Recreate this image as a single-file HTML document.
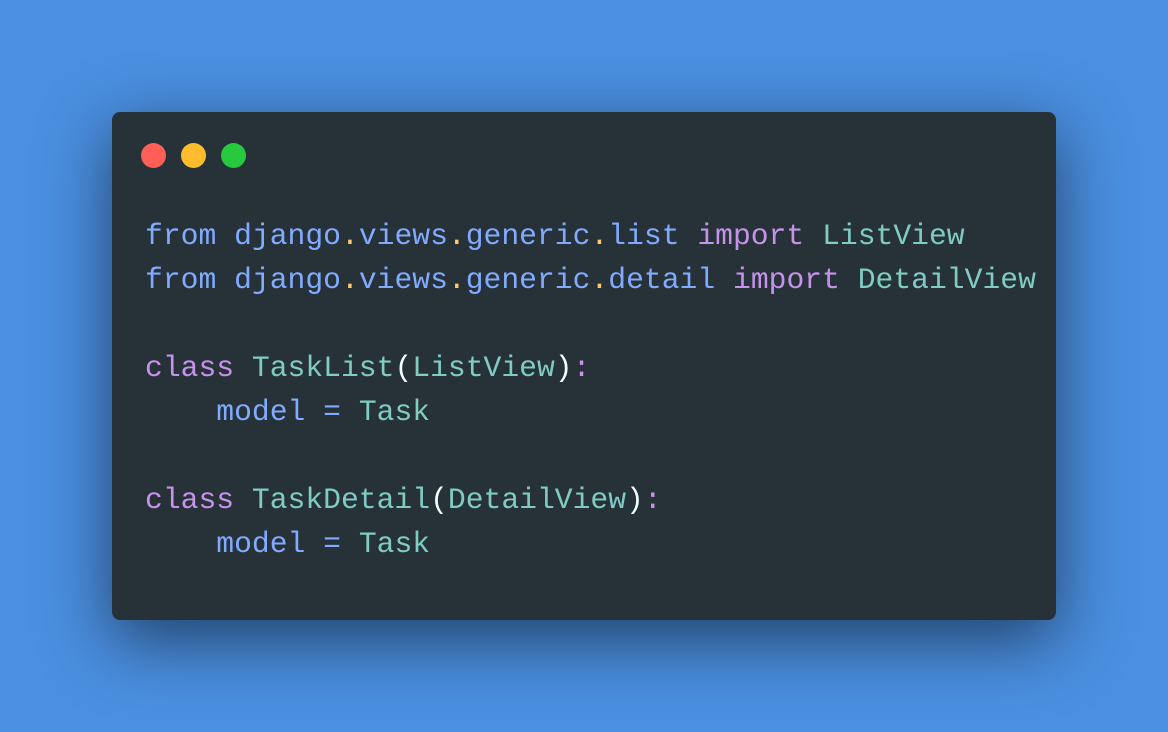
<!DOCTYPE html>
<html><head><style>
html,body{margin:0;padding:0}
body{width:1168px;height:732px;background:#4a8fe0;position:relative;overflow:hidden;font-family:"Liberation Mono",monospace}
.win{position:absolute;left:112px;top:112px;width:944px;height:508px;background:#263238;border-radius:8px;box-shadow:0 20px 68px rgba(0,0,0,0.55)}
.d{position:absolute;top:31px;width:25px;height:25px;border-radius:50%}
pre{position:absolute;left:33px;top:102px;margin:0;font-family:"Liberation Mono",monospace;font-size:29.7px;line-height:44px;color:#eeffff}
.b{color:#82aaff}.p{color:#c792ea}.t{color:#80cbc4}.y{color:#ffcb6b}.w{color:#eeffff}
</style></head><body>
<div class="win">
<div class="d" style="left:29px;background:#ff5f56"></div>
<div class="d" style="left:69px;background:#ffbd2e"></div>
<div class="d" style="left:109px;background:#27c93f"></div>
<pre><span class="b">from django<span class="y">.</span>views<span class="y">.</span>generic<span class="y">.</span>list</span> <span class="p">import</span> <span class="t">ListView</span>
<span class="b">from django<span class="y">.</span>views<span class="y">.</span>generic<span class="y">.</span>detail</span> <span class="p">import</span> <span class="t">DetailView</span>

<span class="p">class</span> <span class="t">TaskList</span><span class="w">(</span><span class="t">ListView</span><span class="w">)</span><span class="p">:</span>
    <span class="b">model</span> <span class="b">=</span> <span class="t">Task</span>

<span class="p">class</span> <span class="t">TaskDetail</span><span class="w">(</span><span class="t">DetailView</span><span class="w">)</span><span class="p">:</span>
    <span class="b">model</span> <span class="b">=</span> <span class="t">Task</span></pre>
</div>
</body></html>
